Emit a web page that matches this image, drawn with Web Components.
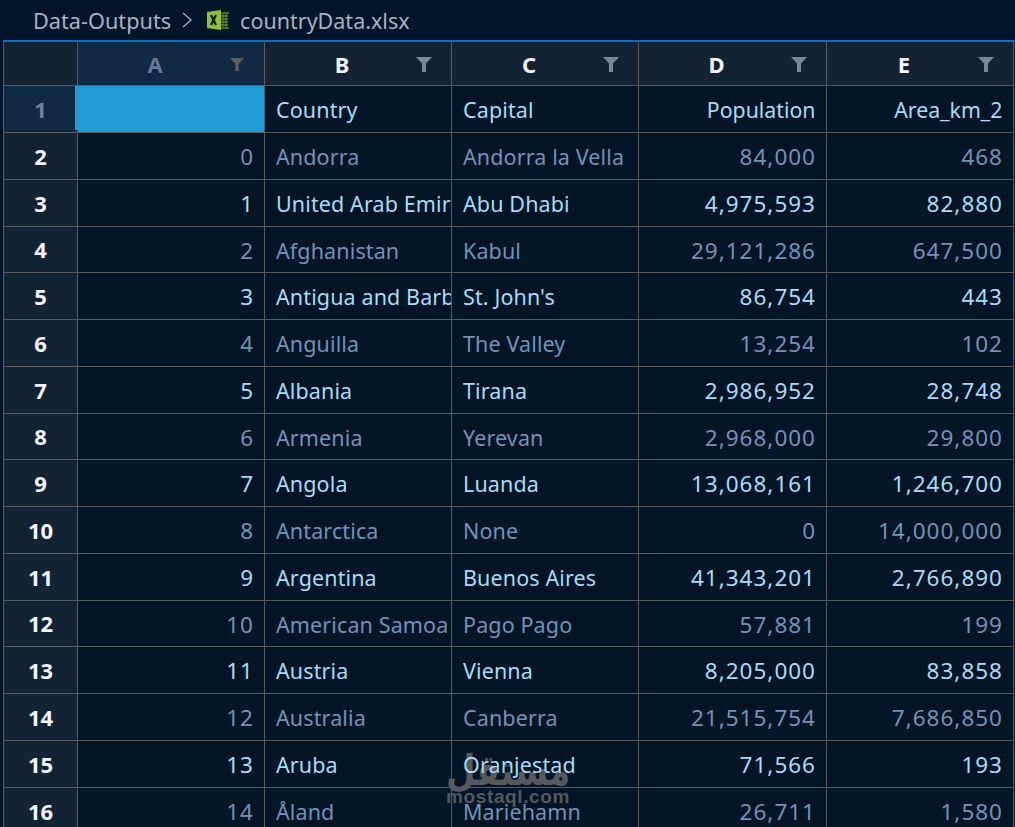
<!DOCTYPE html>
<html>
<head>
<meta charset="utf-8">
<style>
  html, body { margin: 0; height: 100%; background: #02142a; overflow: hidden; }
  body { font-family: "Noto Sans", "Liberation Sans", sans-serif; }
</style>
</head>
<body>
<x-breadcrumb folder="Data-Outputs" file="countryData.xlsx"></x-breadcrumb>
<x-sheet></x-sheet>
<script>
'use strict';

(function () {
  const ROWS = [
    ['Country', 'Capital', 'Population', 'Area_km_2'],
    ['Andorra', 'Andorra la Vella', '84,000', '468'],
    ['United Arab Emirates', 'Abu Dhabi', '4,975,593', '82,880'],
    ['Afghanistan', 'Kabul', '29,121,286', '647,500'],
    ['Antigua and Barbuda', "St. John's", '86,754', '443'],
    ['Anguilla', 'The Valley', '13,254', '102'],
    ['Albania', 'Tirana', '2,986,952', '28,748'],
    ['Armenia', 'Yerevan', '2,968,000', '29,800'],
    ['Angola', 'Luanda', '13,068,161', '1,246,700'],
    ['Antarctica', 'None', '0', '14,000,000'],
    ['Argentina', 'Buenos Aires', '41,343,201', '2,766,890'],
    ['American Samoa', 'Pago Pago', '57,881', '199'],
    ['Austria', 'Vienna', '8,205,000', '83,858'],
    ['Australia', 'Canberra', '21,515,754', '7,686,850'],
    ['Aruba', 'Oranjestad', '71,566', '193'],
    ['Åland', 'Mariehamn', '26,711', '1,580']
  ];

  class XBreadcrumb extends HTMLElement {
    constructor() {
      super();
      this.attachShadow({ mode: 'open' });
    }
    connectedCallback() {
      this.shadowRoot.innerHTML = `
      <style>
        :host {
          display: flex;
          align-items: center;
          height: 40px;
          padding: 0 0 0 33px;
          box-sizing: border-box;
          font-size: 21.7px;
          color: #a5b2c4;
          background: #02142a;
        }
        svg { flex: none; display: block; }
        .chev { margin: 0 15px 0 11px; }
        .name { margin-left: 11px; font-size: 21.5px; }
      </style>
      <span>${this.getAttribute('folder')}</span>
      <svg class="chev" width="10" height="16" viewBox="0 0 10 16"><path d="M1 1l8 7-8 7" fill="none" stroke="#a5b2c4" stroke-width="1.3"/></svg>
      <svg width="22" height="20" viewBox="0 0 22 20">
        <path d="M0 2l14-2v20L0 18z" fill="#8fc13e"/>
        <path d="M14 3h8M14 6h7M14 9h7M14 12h7M14 15h7M14 18h8" stroke="#8fc13e" stroke-width="1"/>
        <path d="M16 4v13M19 4v13" stroke="#5f8a2a" stroke-width="1"/>
        <path d="M4 5l5 10M9 5l-5 10" stroke="#0a1d0a" stroke-width="2.2"/>
      </svg>
      <span class="name">${this.getAttribute('file')}</span>`;
    }
  }
  customElements.define('x-breadcrumb', XBreadcrumb);

  // column letter with its filter funnel
  class XColHead extends HTMLElement {
    constructor() {
      super();
      this.attachShadow({ mode: 'open' }).innerHTML = `
      <style>
        :host {
          display: flex;
          align-items: center;
          justify-content: center;
          position: relative;
          background: #132333;
          color: #f2f4ff;
          font-weight: 700;
          font-size: 22px;
          border-right: 1px solid #5b5b5b;
          border-bottom: 1px solid #5b5b5b;
          box-sizing: border-box;
          padding-right: 32px;
          min-width: 0;
        }
        :host([active]) {
          color: #66788f;
          background-color: #0f2a42;
          background-image: radial-gradient(#173049 35%, transparent 40%);
          background-size: 2px 2px;
        }
        svg { position: absolute; right: 19px; top: 15px; }
        :host([active]) svg { right: 20px; width: 14px; }
        :host([active]) path { fill: #5c5e60; }
      </style>
      <slot></slot>
      <svg width="16" height="15" viewBox="0 0 16 15"><path d="M0 0h16L10 6.5V15H6V6.5z" fill="#7a8896"/></svg>`;
    }
  }
  customElements.define('x-col-head', XColHead);

  class XRowHead extends HTMLElement {
    constructor() {
      super();
      this.attachShadow({ mode: 'open' }).innerHTML = `
      <style>
        :host {
          display: flex;
          align-items: center;
          justify-content: center;
          background: #132333;
          color: #f2f4ff;
          font-weight: 700;
          font-size: 22px;
          border-right: 1px solid #5b5b5b;
          border-bottom: 1px solid #5b5b5b;
          box-sizing: border-box;
        }
        :host([active]) {
          color: #748598;
          background-color: #0f2a42;
          background-image: radial-gradient(#173049 35%, transparent 40%);
          background-size: 2px 2px;
        }
      </style>
      <slot></slot>`;
    }
  }
  customElements.define('x-row-head', XRowHead);

  class XCell extends HTMLElement {
    constructor() {
      super();
      this.attachShadow({ mode: 'open' }).innerHTML = `
      <style>
        :host {
          display: block;
          line-height: 47px;
          padding: 0 11px;
          white-space: nowrap;
          overflow: hidden;
          min-width: 0;
          font-size: 21.5px;
          letter-spacing: .12px;
          color: #a6dcf9;
          border-right: 1px solid #5b5b5b;
          border-bottom: 1px solid #5b5b5b;
          box-sizing: border-box;
        }
        :host([dim]) { color: #7093b8; }
        :host([right]) { text-align: right; letter-spacing: 0; padding-right: 10.5px; font-size: 21.3px; }
        /* digits run wider in the reference font */
        :host([num]) { text-align: right; font-size: 22.5px; letter-spacing: 1px; padding-right: 10px; }
        :host([selected]) {
          background: #1f9cd6;
          overflow: visible;
          box-shadow: -3px -3px 0 #1f9cd6;
        }
      </style>
      <slot></slot>`;
    }
  }
  customElements.define('x-cell', XCell);

  // site stamp that sits behind the cell text
  class XWatermark extends HTMLElement {
    constructor() {
      super();
      this.attachShadow({ mode: 'open' }).innerHTML = `
      <style>
        :host {
          position: absolute;
          left: 442px;
          top: 711px;
          width: 124px;
          color: #55595c;
          text-align: center;
          font-family: "DejaVu Sans", sans-serif;
          font-weight: 700;
        }
        .ar { font-size: 34px; line-height: 34px; transform: scaleY(1.25); }
        .en { font-family: "Liberation Sans", sans-serif; font-size: 19px; line-height: 20px; letter-spacing: .6px; }
      </style>
      <div class="ar">مستقل</div>
      <div class="en">mostaql.com</div>`;
    }
  }
  customElements.define('x-watermark', XWatermark);

  class XSheet extends HTMLElement {
    constructor() {
      super();
      const shadow = this.attachShadow({ mode: 'open' });
      let cells = '<x-col-head class="corner"></x-col-head>';
      ['A', 'B', 'C', 'D', 'E'].forEach((c, i) => {
        cells += `<x-col-head ${i === 0 ? 'active' : ''}>${c}</x-col-head>`;
      });
      ROWS.forEach((r, i) => {
        const dim = i % 2 === 1 ? 'dim' : '';
        const kind = i === 0 ? 'right' : 'num';
        cells += `<x-row-head ${i === 0 ? 'active' : ''}>${i + 1}</x-row-head>`;
        cells += i === 0
          ? '<x-cell selected></x-cell>'
          : `<x-cell num ${dim}>${i - 1}</x-cell>`;
        cells += `<x-cell ${dim}>${r[0]}</x-cell><x-cell ${dim}>${r[1]}</x-cell>`;
        cells += `<x-cell ${kind} ${dim}>${r[2]}</x-cell><x-cell ${kind} ${dim}>${r[3]}</x-cell>`;
      });
      shadow.innerHTML = `
      <style>
        :host {
          display: block;
          position: relative;
          margin-left: 3px;
          border-left: 1px solid #0a6fbd;
          border-top: 2px solid #0a6fbd;
          background: #011526;
          height: 787px;
          overflow: hidden;
        }
        .grid {
          position: relative;
          display: grid;
          grid-template-columns: 74px 187px 187px 187px 188px 187px;
          grid-template-rows: 44px 47px repeat(14, 46.75px);
        }
      </style>
      <x-watermark></x-watermark>
      <div class="grid">${cells}</div>`;
      // the corner has no letter, so its funnel goes
      const corner = shadow.querySelector('.corner');
      corner.shadowRoot.querySelector('svg').remove();
    }
  }
  customElements.define('x-sheet', XSheet);
})();
</script>
</body>
</html>
